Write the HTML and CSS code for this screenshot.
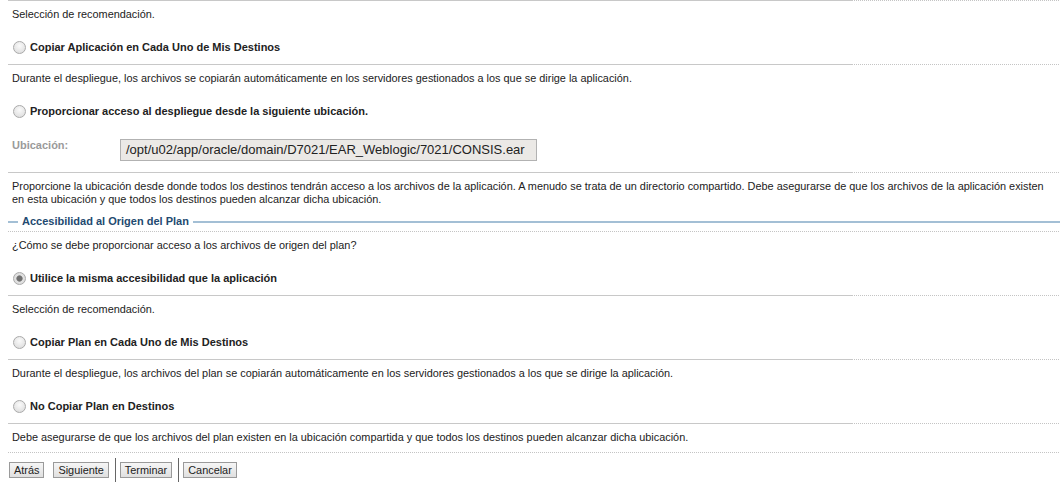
FILE: index.html
```html
<!DOCTYPE html>
<html lang="es">
<head>
<meta charset="utf-8">
<title>Asistente de despliegue</title>
<link rel="stylesheet" href="styles.css">
</head>
<body>
<div class="page">
  <div class="sep"></div>
  <div class="desc">Selección de recomendación.</div>
  <label class="radio-row"><span class="radio"></span><span class="rlabel">Copiar Aplicación en Cada Uno de Mis Destinos</span></label>
  <div class="sep"></div>
  <div class="desc">Durante el despliegue, los archivos se copiarán automáticamente en los servidores gestionados a los que se dirige la aplicación.</div>
  <label class="radio-row"><span class="radio"></span><span class="rlabel">Proporcionar acceso al despliegue desde la siguiente ubicación.</span></label>
  <div class="loc-row">
    <span class="loc-label">Ubicación:</span>
    <span class="loc-input">/opt/u02/app/oracle/domain/D7021/EAR_Weblogic/7021/CONSIS.ear</span>
  </div>
  <div class="sep"></div>
  <div class="para">Proporcione la ubicación desde donde todos los destinos tendrán acceso a los archivos de la aplicación. A menudo se trata de un directorio compartido. Debe asegurarse de que los archivos de la aplicación existen en esta ubicación y que todos los destinos pueden alcanzar dicha ubicación.</div>
  <div class="legend"><span class="legend-lead"></span><span class="legend-text">Accesibilidad al Origen del Plan</span><span class="legend-tail"></span></div>
  <div class="dots"></div>
  <div class="desc">¿Cómo se debe proporcionar acceso a los archivos de origen del plan?</div>
  <label class="radio-row"><span class="radio checked"></span><span class="rlabel">Utilice la misma accesibilidad que la aplicación</span></label>
  <div class="sep"></div>
  <div class="desc">Selección de recomendación.</div>
  <label class="radio-row"><span class="radio"></span><span class="rlabel">Copiar Plan en Cada Uno de Mis Destinos</span></label>
  <div class="sep"></div>
  <div class="desc">Durante el despliegue, los archivos del plan se copiarán automáticamente en los servidores gestionados a los que se dirige la aplicación.</div>
  <label class="radio-row"><span class="radio"></span><span class="rlabel">No Copiar Plan en Destinos</span></label>
  <div class="sep"></div>
  <div class="desc last">Debe asegurarse de que los archivos del plan existen en la ubicación compartida y que todos los destinos pueden alcanzar dicha ubicación.</div>
  <div class="dots"></div>
  <div class="buttons">
    <button class="btn">Atrás</button>
    <button class="btn">Siguiente</button>
    <span class="vsep"></span>
    <button class="btn">Terminar</button>
    <span class="vsep"></span>
    <button class="btn">Cancelar</button>
  </div>
</div>
</body>
</html>
```
FILE: styles.css
```css
html, body {
  margin: 0;
  padding: 0;
  background: #ffffff;
}
body {
  font-family: "Liberation Sans", Arial, sans-serif;
  font-size: 10.9px;
  color: #222222;
}
.page {
  padding-left: 8px;
}
.sep {
  height: 1px;
  background:
    linear-gradient(#c8c8c8, #c8c8c8) left top / 845px 1px no-repeat,
    repeating-linear-gradient(90deg, #c4c4c4 0 1px, transparent 1px 2px);
}
.dots {
  height: 1px;
  background: repeating-linear-gradient(90deg, #c4c4c4 0 1px, transparent 1px 2px);
}
.desc {
  padding: 7px 0 0 4px;
  line-height: 13px;
}
.radio-row {
  display: flex;
  align-items: center;
  padding: 20px 0 10px 5px;
  height: 13px;
  font-weight: bold;
  font-size: 11px;
}
.radio {
  width: 11px;
  height: 11px;
  border: 1px solid #aaaaaa;
  border-radius: 50%;
  background: radial-gradient(circle at 50% 35%, #fafafa 0, #e6e6e6 60%, #d8d8d8 100%);
  box-sizing: content-box;
  flex: none;
}
.radio.checked {
  background: radial-gradient(circle, #707070 0 2.5px, #999 3px, #e2e2e2 3.5px, #d6d6d6 100%);
}
.rlabel {
  margin-left: 4px;
  line-height: 13px;
}
.loc-row {
  display: flex;
  align-items: flex-start;
  padding: 11px 0 11px 4px;
}
.loc-label {
  width: 108px;
  font-weight: bold;
  font-size: 11px;
  color: #9a9a9a;
  line-height: 13px;
}
.loc-input {
  width: 410px;
  height: 20px;
  border: 1px solid #b2b2b2;
  background: #ebe9e6;
  font-size: 13px;
  line-height: 20px;
  padding: 0 0 0 5px;
  color: #222;
  box-sizing: content-box;
  white-space: nowrap;
  overflow: hidden;
}
.para {
  padding: 7px 8px 0 4px;
  line-height: 13px;
}
.legend {
  display: flex;
  align-items: center;
  padding-top: 6px;
  height: 19px;
}
.legend-lead {
  width: 10px;
  height: 2px;
  background: #a3bfd5;
  flex: none;
}
.legend-text {
  font-weight: bold;
  font-size: 11px;
  color: #234a70;
  padding: 0 4px;
  line-height: 13px;
}
.legend-tail {
  flex: 1;
  height: 2px;
  background: #a3bfd5;
}
.desc.last {
  padding-bottom: 8px;
}
.buttons {
  display: flex;
  align-items: center;
  padding: 5px 0 0 1px;
  height: 24px;
}
.btn {
  font-family: "Liberation Sans", Arial, sans-serif;
  font-size: 10.9px;
  color: #222;
  height: 16px;
  line-height: 14px;
  padding: 0 4px;
  border: 1px solid #9a9a9a;
  background: linear-gradient(#f6f6f6, #e0e0e0);
  margin-right: 9px;
  border-radius: 0;
}
.vsep {
  width: 1px;
  height: 24px;
  background: #666;
  margin: 0 4px 0 -3px;
}
```
